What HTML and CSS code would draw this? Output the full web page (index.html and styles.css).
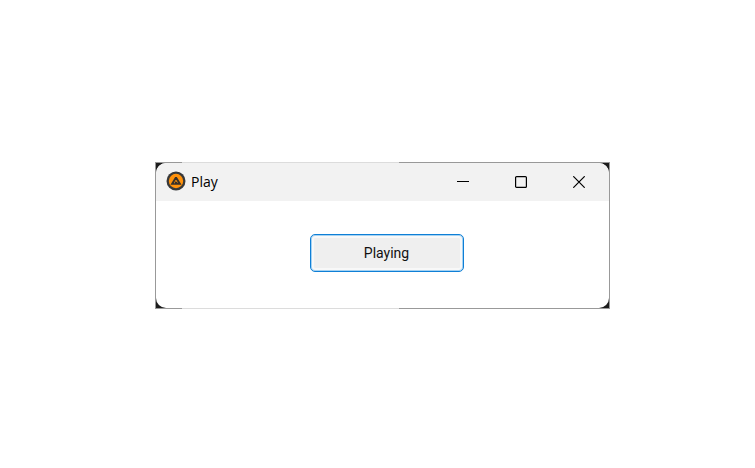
FILE: index.html
```html
<!DOCTYPE html>
<html lang="en">
<head>
<meta charset="utf-8">
<title>Play</title>
<link rel="stylesheet" href="styles.css">
</head>
<body>
<main class="frame">
  <section class="window">
    <header class="titlebar">
      <svg class="app-icon" viewBox="0 0 20 20" aria-hidden="true">
        <circle cx="10" cy="10" r="9.5" fill="#38393a"/>
        <circle cx="10" cy="10" r="7.2" fill="#ff920c"/>
        <path d="M10 6.4 6.2 12.8H8.2M10 6.4 13.8 12.8H9.4L10.4 10.8" fill="none" stroke="#38312a" stroke-width="2"/>
      </svg>
      <h1 class="title">Play</h1>
      <div class="controls">
        <button class="control" type="button" aria-label="Minimize">
          <svg viewBox="0 0 12 12"><path d="M0 5.5H12"/></svg>
        </button>
        <button class="control" type="button" aria-label="Maximize">
          <svg viewBox="0 0 12 12"><rect x=".6" y=".6" width="10.8" height="10.8" rx="1"/></svg>
        </button>
        <button class="control" type="button" aria-label="Close">
          <svg viewBox="0 0 12 12"><path d="M.3.3 11.7 11.7M11.7.3.3 11.7"/></svg>
        </button>
      </div>
    </header>
    <div class="content">
      <button class="play" type="button">Playing</button>
    </div>
  </section>
</main>
</body>
</html>
```
FILE: styles.css
```css
* {
  box-sizing: border-box;
}

body {
  margin: 0;
  min-height: 100vh;
  display: flex;
  align-items: center;
  padding: 3px 145px 0 155px;
  background: #fff;
  font-family: "Open Sans", "Noto Sans", sans-serif;
  color: #000;
}

.frame {
  flex: 1;
  padding: 1px;
  --edge: linear-gradient(90deg, #999 6%, #dcdcdc 6% 53.6%, #999 53.6%);
  background:
    var(--edge) top / 100% 1px no-repeat,
    var(--edge) bottom / 100% 1px no-repeat,
    linear-gradient(90deg, #999 1px, #1c1c1c 1px calc(100% - 1px), #999 calc(100% - 1px));
}

.window {
  border-radius: 10px;
  background: #fff;
  overflow: hidden;
}

.titlebar {
  display: flex;
  align-items: center;
  height: 38px;
  padding-left: 10px;
  background: #f2f2f2;
}

.app-icon {
  width: 20px;
  height: 20px;
  margin-bottom: 2px;
}

.title {
  margin: 0 0 0 5px;
  font-size: 14px;
  line-height: 20px;
  font-weight: 400;
}

.controls {
  display: flex;
  height: 100%;
  margin-left: auto;
  padding-right: 1px;
}

.control {
  display: grid;
  place-items: center;
  width: 58px;
  padding: 0;
  border: 0;
  background: none;
}

.control svg {
  width: 12px;
  height: 12px;
  fill: none;
  stroke: #000;
  stroke-width: 1.2;
}

.content {
  display: flex;
  justify-content: center;
  padding: 33px 0 36px 8px;
}

.play {
  width: 154px;
  height: 38px;
  padding: 0;
  border: 1px solid #0f7fd6;
  border-radius: 5px;
  background: #efefef;
  box-shadow: inset 0 0 0 1px #a5d2f2, inset 0 0 0 3px #f8f8f8;
  color: #111;
  font: 14px/20px Roboto, sans-serif;
}
```
